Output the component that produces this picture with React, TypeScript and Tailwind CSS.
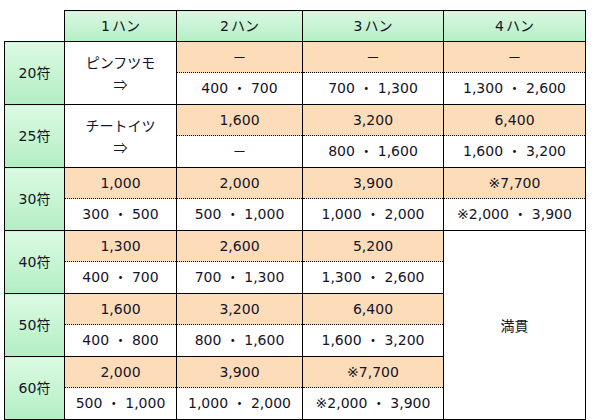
import React from "react";

type Row = {
  fu: string;
  first: { ron?: string; tsumo?: string; label?: string[] };
  cols: { ron: string; tsumo: string }[];
};

const rows: Row[] = [
  {
    fu: "20符",
    first: { label: ["ピンフツモ", "⇒"] },
    cols: [
      { ron: "－", tsumo: "400 ・ 700" },
      { ron: "－", tsumo: "700 ・ 1,300" },
      { ron: "－", tsumo: "1,300 ・ 2,600" },
    ],
  },
  {
    fu: "25符",
    first: { label: ["チートイツ", "⇒"] },
    cols: [
      { ron: "1,600", tsumo: "－" },
      { ron: "3,200", tsumo: "800 ・ 1,600" },
      { ron: "6,400", tsumo: "1,600 ・ 3,200" },
    ],
  },
  {
    fu: "30符",
    first: { ron: "1,000", tsumo: "300 ・ 500" },
    cols: [
      { ron: "2,000", tsumo: "500 ・ 1,000" },
      { ron: "3,900", tsumo: "1,000 ・ 2,000" },
      { ron: "※7,700", tsumo: "※2,000 ・ 3,900" },
    ],
  },
  {
    fu: "40符",
    first: { ron: "1,300", tsumo: "400 ・ 700" },
    cols: [
      { ron: "2,600", tsumo: "700 ・ 1,300" },
      { ron: "5,200", tsumo: "1,300 ・ 2,600" },
    ],
  },
  {
    fu: "50符",
    first: { ron: "1,600", tsumo: "400 ・ 800" },
    cols: [
      { ron: "3,200", tsumo: "800 ・ 1,600" },
      { ron: "6,400", tsumo: "1,600 ・ 3,200" },
    ],
  },
  {
    fu: "60符",
    first: { ron: "2,000", tsumo: "500 ・ 1,000" },
    cols: [
      { ron: "3,900", tsumo: "1,000 ・ 2,000" },
      { ron: "※7,700", tsumo: "※2,000 ・ 3,900" },
    ],
  },
];

const ronCell =
  "border border-black [border-bottom-style:dotted] bg-[#fddcba] text-center align-middle h-[31px] p-0";
const tsumoCell = "border border-black border-t-0 bg-white text-center align-middle h-[32px] p-0";

export default function App() {
  return (
    <div className="w-[592px] h-[420px] overflow-hidden bg-white pt-[10px] pl-[4px] text-[14px] text-[#141428] font-['DejaVu_Sans','Noto_Sans_CJK_JP',sans-serif]">
      <table className="border-collapse table-fixed w-[582px]">
        <colgroup>
          <col className="w-[60px]" />
          <col className="w-[112px]" />
          <col className="w-[126px]" />
          <col className="w-[141px]" />
          <col className="w-[142px]" />
        </colgroup>
        <thead>
          <tr className="h-[31px]">
            <th className="p-0" />
            {["1", "2", "3", "4"].map((h) => (
              <th
                key={h}
                className="border border-black font-normal p-0 bg-gradient-to-b from-[#d9f8e1] to-[#b4efc5]"
              >
                {h}
                <span className="ml-[2px] font-['Noto_Sans_CJK_JP',sans-serif]">ハン</span>
              </th>
            ))}
          </tr>
        </thead>
        <tbody>
          {rows.map((r, i) => (
            <React.Fragment key={r.fu}>
              <tr>
                <td
                  rowSpan={2}
                  className="border border-black text-center align-middle p-0 bg-gradient-to-b from-[#dcfae4] to-[#b2eec2]"
                >
                  {r.fu}
                </td>
                {r.first.label ? (
                  <td rowSpan={2} className="border border-black bg-white text-center align-middle p-0 leading-[22px]">
                    <div className="flex flex-col items-center font-['Noto_Sans_CJK_JP',sans-serif]">
                      <span>{r.first.label[0]}</span>
                      <span>{r.first.label[1]}</span>
                    </div>
                  </td>
                ) : (
                  <td className={ronCell}>{r.first.ron}</td>
                )}
                {r.cols.map((c, j) => (
                  <td key={j} className={ronCell}>
                    {c.ron}
                  </td>
                ))}
                {i === 3 && (
                  <td rowSpan={6} className="border border-black bg-white text-center align-middle p-0 font-['Noto_Sans_CJK_JP',sans-serif]">
                    満貫
                  </td>
                )}
              </tr>
              <tr>
                {!r.first.label && <td className={tsumoCell}>{r.first.tsumo}</td>}
                {r.cols.map((c, j) => (
                  <td key={j} className={tsumoCell}>
                    {c.tsumo}
                  </td>
                ))}
              </tr>
            </React.Fragment>
          ))}
        </tbody>
      </table>
    </div>
  );
}
